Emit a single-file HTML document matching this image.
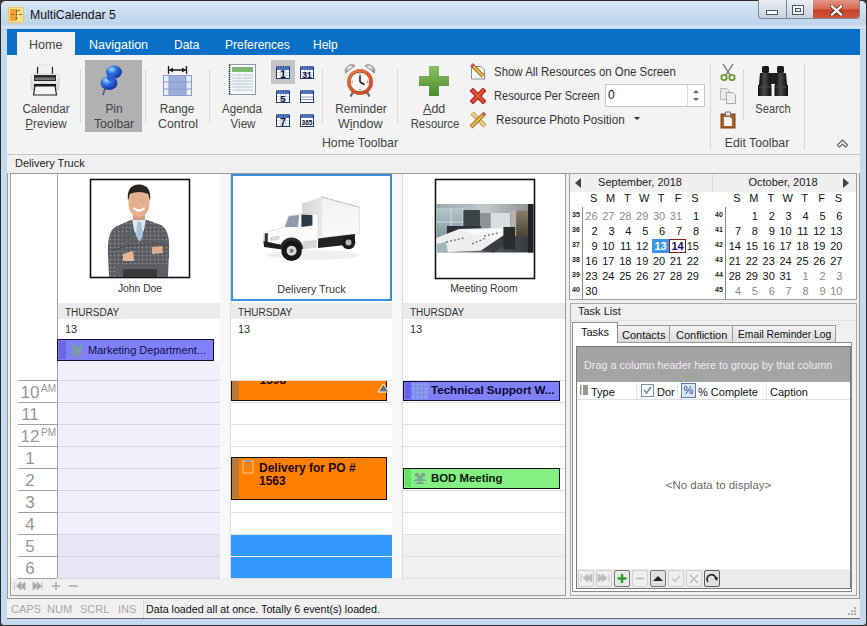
<!DOCTYPE html>
<html><head><meta charset="utf-8">
<style>
*{margin:0;padding:0;box-sizing:border-box}
html,body{width:867px;height:626px;overflow:hidden;background:#3a3a3a}
body{font-family:"Liberation Sans",sans-serif;font-size:12px;color:#262626;position:relative}
.a{position:absolute}
.frame{left:0;top:0;width:867px;height:626px;border:1px solid #2b2b2b;border-radius:6px 6px 4px 4px;background:#c4daf0}
.title{left:30px;top:8px;font-size:12.5px;color:#111;transform-origin:0 0;transform:scaleX(0.98);white-space:nowrap}
.tabbar{left:7px;top:29px;width:853px;height:26px;background:#0a6fc6}
.tab{top:9px;color:#fff;font-size:12px}
.hometab{left:17px;top:32px;width:58px;height:23px;background:#f3f3f3}
.ribbon{left:7px;top:55px;width:853px;height:100px;background:#f3f3f3;border-bottom:1px solid #c6c6c6}
.lb{font-size:12.5px;color:#444;text-align:center;line-height:15px;white-space:nowrap}
.sep{width:1px;background:#d8d8d8}
</style></head><body>
<div class="a frame"></div>
<div class="a" style="left:1px;top:1px;width:865px;height:27px;border-radius:5px 5px 0 0;background:linear-gradient(#dae8f6,#c8dcf0 45%,#bed4ec 85%,#dce8f4)"></div>
<div class="a" style="left:7px;top:155px;width:853px;height:463px;background:#f0f0f0;border-left:1px solid #8e9aa6;border-right:1px solid #8e9aa6"></div>
<!-- title bar -->
<svg class="a" style="left:8px;top:7px" width="16" height="16" viewBox="0 0 16 16"><rect x="0.5" y="0.5" width="15" height="15" rx="1.5" fill="#fbe08a" stroke="#f2c650"/><rect x="2" y="2" width="7" height="12" fill="#f2a038"/><path d="M8.5 3 V13" stroke="#6a4a10" stroke-width="1.2" stroke-dasharray="2 1.5"/><path d="M3 7.5 H6 M11 7.5 H14" stroke="#b05010" stroke-width="1.2"/><path d="M10 4 L12 3" stroke="#6a4a10" stroke-width="1"/></svg>
<div class="a title">MultiCalendar 5</div>
<!-- window buttons -->
<div class="a" style="left:758px;top:0;width:102px;height:19px;border:1px solid #7a8696;border-top:none;border-radius:0 0 4px 4px;overflow:hidden;background:linear-gradient(#e9eef4,#c9d3de)">
  <div class="a" style="left:27px;top:0;width:1px;height:19px;background:#7a8696"></div>
  <div class="a" style="left:54px;top:0;width:47px;height:19px;background:linear-gradient(#e49484,#d86a56 45%,#c8402a 55%,#d05a40)"></div>
</div>
<div class="a" style="left:766px;top:10px;width:12px;height:5px;background:#fff;border:1px solid #4a5566"></div>
<div class="a" style="left:792px;top:5px;width:12px;height:10px;border:1px solid #4a5566;background:#fff"></div>
<div class="a" style="left:795px;top:8px;width:6px;height:4px;border:1px solid #4a5566;background:#dfe6ee"></div>
<svg class="a" style="left:830px;top:5px" width="13" height="11" viewBox="0 0 13 11"><path d="M2 1.5 L11 9.5 M11 1.5 L2 9.5" stroke="#5a2018" stroke-width="4" stroke-linecap="square"/><path d="M2 1.5 L11 9.5 M11 1.5 L2 9.5" stroke="#fff" stroke-width="2.4" stroke-linecap="square"/></svg>

<!-- tab bar -->
<div class="a tabbar"></div>
<div class="a hometab"></div>
<div class="a tab" style="left:29px;top:38px;color:#444;font-size:12.5px">Home</div>
<div class="a tab" style="left:89px;top:38px;font-size:12.5px">Navigation</div>
<div class="a tab" style="left:174px;top:38px">Data</div>
<div class="a tab" style="left:225px;top:38px">Preferences</div>
<div class="a tab" style="left:313px;top:38px">Help</div>

<!-- ribbon -->
<div class="a ribbon"></div>
<!-- separators -->
<div class="a sep" style="left:80px;top:70px;height:53px"></div>
<div class="a sep" style="left:145px;top:70px;height:53px"></div>
<div class="a sep" style="left:209px;top:70px;height:53px"></div>
<div class="a sep" style="left:322px;top:70px;height:53px"></div>
<div class="a sep" style="left:397px;top:70px;height:53px"></div>
<div class="a sep" style="left:710px;top:63px;height:87px"></div>
<div class="a sep" style="left:743px;top:70px;height:50px"></div>
<div class="a sep" style="left:804px;top:63px;height:87px"></div>
<!-- pin highlight -->
<div class="a" style="left:85px;top:60px;width:57px;height:72px;background:#b1b1b1"></div>
<div class="a" style="left:271px;top:60px;width:24px;height:24px;background:#c4c4c4"></div>
<!-- printer -->
<svg class="a" style="left:29px;top:64px" width="32" height="32" viewBox="0 0 32 32">
 <defs><linearGradient id="pg" x1="0" y1="0" x2="0" y2="1"><stop offset="0" stop-color="#fafafa"/><stop offset="1" stop-color="#cfcfcf"/></linearGradient></defs>
 <rect x="9" y="1" width="14" height="11" fill="#efefef" stroke="#d4d4d4" stroke-width="0.6"/>
 <path d="M8.5 3 V12 M23.5 3 V12" stroke="#222" stroke-width="1.2"/>
 <rect x="2" y="10" width="28" height="16" rx="3" fill="url(#pg)" stroke="#bbb" stroke-width="0.6"/>
 <rect x="5" y="11" width="22" height="6" fill="#2a2a2a"/>
 <rect x="6" y="13.5" width="20" height="2.5" fill="#777"/>
 <rect x="5" y="20" width="22" height="2.5" fill="#111"/>
 <path d="M6 22 L4.5 31 L27.5 31 L26 22 Z" fill="#f5f5f5" stroke="#222" stroke-width="1.2"/>
</svg>
<div class="a lb" style="left:-14.3px;top:102px;width:120px;transform:scaleX(0.93)">Calendar</div>
<div class="a lb" style="left:-14.4px;top:117px;width:120px;transform:scaleX(0.93)"><u>P</u>review</div>
<!-- pin -->
<svg class="a" style="left:98px;top:64px" width="28" height="32" viewBox="0 0 28 32">
 <defs>
 <radialGradient id="bl" cx="0.35" cy="0.3" r="0.8"><stop offset="0" stop-color="#a8dcff"/><stop offset="0.4" stop-color="#2a6ee0"/><stop offset="1" stop-color="#0a2890"/></radialGradient>
 </defs>
 <path d="M7 24 L5 31" stroke="#556" stroke-width="1.5"/>
 <ellipse cx="11" cy="19" rx="8.5" ry="7" fill="url(#bl)"/>
 <ellipse cx="16" cy="8" rx="8" ry="6.5" fill="url(#bl)"/>
 <ellipse cx="13" cy="14" rx="4" ry="3" fill="#2a5fd0"/>
</svg>
<div class="a lb" style="left:54.0px;top:102px;width:120px;transform:scaleX(0.95)">Pin</div>
<div class="a lb" style="left:53.7px;top:117px;width:120px;transform:scaleX(0.98)">Toolbar</div>
<!-- range -->
<svg class="a" style="left:162px;top:65px" width="31" height="32" viewBox="0 0 31 32">
 <path d="M6.5 1 V9 M24.5 1 V9 M7 5 H24" stroke="#222" stroke-width="1.3"/>
 <path d="M7 5 L11 2.5 V7.5 Z M24 5 L20 2.5 V7.5 Z" fill="#222"/>
 <rect x="1.5" y="10.5" width="28" height="20" fill="#e9eef8" stroke="#8a9ccc"/>
 <rect x="7" y="11" width="17" height="19" fill="#9daed8"/>
 <path d="M2 17 H29 M2 24 H29 M7 11 V30 M24 11 V30" stroke="#8a9ccc" stroke-width="1"/>
</svg>
<div class="a lb" style="left:117.2px;top:102px;width:120px;transform:scaleX(0.94)">Range</div>
<div class="a lb" style="left:118.1px;top:117px;width:120px;transform:scaleX(0.99)">Control</div>
<!-- agenda -->
<svg class="a" style="left:227px;top:64px" width="30" height="32" viewBox="0 0 30 32">
 <rect x="2.5" y="0.5" width="26" height="30" fill="#f4f6f8" stroke="#8c99a6"/>
 <path d="M2.5 1 V31" stroke="#333" stroke-width="1.5" stroke-dasharray="1 1"/>
 <rect x="5" y="3" width="21" height="5" fill="#7ab873"/>
 <path d="M5 11 H26 M5 14 H26 M5 17 H26 M5 20 H26 M5 23 H26 M5 26 H26" stroke="#b9c6d6" stroke-width="1"/>
 <path d="M12 9 V28 M19 9 V28" stroke="#d5dde6" stroke-width="1"/>
</svg>
<div class="a lb" style="left:182.3px;top:102px;width:120px;transform:scaleX(0.93)">Agenda</div>
<div class="a lb" style="left:182.7px;top:117px;width:120px;transform:scaleX(0.93)">View</div>
<!-- small cal icons -->
<svg class="a" style="left:276px;top:65px" width="14" height="14" viewBox="0 0 14 14"><rect x="0.5" y="2" width="13" height="11.5" fill="#fff" stroke="#233a78" stroke-width="1"/><rect x="1" y="2.5" width="12" height="2.5" fill="#4a72c8"/><path d="M2.5 1 V3 M5 1 V3 M7.5 1 V3 M10 1 V3 M12 1 V3" stroke="#233a78" stroke-width="0.9"/><path d="M1 7.5 H13 M1 10 H13 M4.5 5 V13 M7 5 V13 M9.5 5 V13" stroke="#c0cce8" stroke-width="0.8"/><text x="7" y="12.6" font-size="10" font-weight="bold" text-anchor="middle" fill="#0a0a2a" font-family="Liberation Sans">1</text></svg>
<svg class="a" style="left:300px;top:65px" width="14" height="14" viewBox="0 0 14 14"><rect x="0.5" y="2" width="13" height="11.5" fill="#fff" stroke="#233a78" stroke-width="1"/><rect x="1" y="2.5" width="12" height="2.5" fill="#4a72c8"/><path d="M2.5 1 V3 M5 1 V3 M7.5 1 V3 M10 1 V3 M12 1 V3" stroke="#233a78" stroke-width="0.9"/><path d="M1 7.5 H13 M1 10 H13 M4.5 5 V13 M7 5 V13 M9.5 5 V13" stroke="#c0cce8" stroke-width="0.8"/><text x="7" y="12.6" font-size="8.5" font-weight="bold" text-anchor="middle" fill="#0a0a2a" font-family="Liberation Sans">31</text></svg>
<svg class="a" style="left:276px;top:89px" width="14" height="14" viewBox="0 0 14 14"><rect x="0.5" y="2" width="13" height="11.5" fill="#fff" stroke="#233a78" stroke-width="1"/><rect x="1" y="2.5" width="12" height="2.5" fill="#4a72c8"/><path d="M2.5 1 V3 M5 1 V3 M7.5 1 V3 M10 1 V3 M12 1 V3" stroke="#233a78" stroke-width="0.9"/><path d="M1 7.5 H13 M1 10 H13 M4.5 5 V13 M7 5 V13 M9.5 5 V13" stroke="#c0cce8" stroke-width="0.8"/><text x="7" y="12.6" font-size="9.5" font-weight="bold" text-anchor="middle" fill="#0a0a2a" font-family="Liberation Sans">5</text></svg>
<svg class="a" style="left:300px;top:89px" width="14" height="14" viewBox="0 0 14 14"><rect x="0.5" y="2" width="13" height="11.5" fill="#fff" stroke="#233a78" stroke-width="1"/><rect x="1" y="2.5" width="12" height="2.5" fill="#4a72c8"/><path d="M2.5 1 V3 M5 1 V3 M7.5 1 V3 M10 1 V3 M12 1 V3" stroke="#233a78" stroke-width="0.9"/><path d="M1 8 H13 M1 10.5 H13" stroke="#6a7ab0" stroke-width="0.8"/></svg>
<svg class="a" style="left:276px;top:113px" width="14" height="14" viewBox="0 0 14 14"><rect x="0.5" y="2" width="13" height="11.5" fill="#fff" stroke="#233a78" stroke-width="1"/><rect x="1" y="2.5" width="12" height="2.5" fill="#4a72c8"/><path d="M2.5 1 V3 M5 1 V3 M7.5 1 V3 M10 1 V3 M12 1 V3" stroke="#233a78" stroke-width="0.9"/><path d="M1 7.5 H13 M1 10 H13 M4.5 5 V13 M7 5 V13 M9.5 5 V13" stroke="#c0cce8" stroke-width="0.8"/><text x="7" y="12.6" font-size="10" font-weight="bold" text-anchor="middle" fill="#0a0a2a" font-family="Liberation Sans">7</text></svg>
<svg class="a" style="left:300px;top:113px" width="14" height="14" viewBox="0 0 14 14"><rect x="0.5" y="2" width="13" height="11.5" fill="#fff" stroke="#233a78" stroke-width="1"/><rect x="1" y="2.5" width="12" height="2.5" fill="#4a72c8"/><path d="M2.5 1 V3 M5 1 V3 M7.5 1 V3 M10 1 V3 M12 1 V3" stroke="#233a78" stroke-width="0.9"/><text x="7" y="12" font-size="6.6" font-weight="bold" text-anchor="middle" fill="#0a0a2a" font-family="Liberation Sans">365</text></svg>
<!-- alarm clock -->
<svg class="a" style="left:344px;top:63px" width="32" height="35" viewBox="0 0 32 35">
<defs><radialGradient id="bell" cx="0.4" cy="0.3" r="0.8"><stop offset="0" stop-color="#f4f4f4"/><stop offset="1" stop-color="#8c8c8c"/></radialGradient>
<radialGradient id="rim" cx="0.4" cy="0.35" r="0.7"><stop offset="0" stop-color="#f08a5a"/><stop offset="1" stop-color="#c84a20"/></radialGradient></defs>
<path d="M1.5 10 A6.5 6.5 0 0 1 11 2.5 Z" fill="url(#bell)" stroke="#777" stroke-width="0.8"/>
<path d="M30.5 10 A6.5 6.5 0 0 0 21 2.5 Z" fill="url(#bell)" stroke="#777" stroke-width="0.8"/>
<path d="M9 29 L6.5 33.5 M23 29 L25.5 33.5" stroke="#666" stroke-width="2.2"/>
<circle cx="16" cy="19" r="13" fill="url(#rim)"/>
<circle cx="16" cy="19" r="9.8" fill="#f8f8f6" stroke="#a83c18" stroke-width="0.8"/>
<g stroke="#555" stroke-width="1"><path d="M16 10.5 V12 M16 26 V27.5 M7.5 19 H9 M23 19 H24.5"/></g>
<path d="M16 19 V12.5 M16 19 L20.5 21.5" stroke="#222" stroke-width="1.6"/>
</svg>
<div class="a lb" style="left:301.0px;top:102px;width:120px;transform:scaleX(0.95)">Reminder</div>
<div class="a lb" style="left:300.2px;top:117px;width:120px;transform:scaleX(1.0)">W<u>i</u>ndow</div>
<div class="a lb" style="left:299.6px;top:136px;width:120px;transform:scaleX(0.98)">Home Toolbar</div>
<!-- add -->
<svg class="a" style="left:418px;top:65px" width="32" height="32" viewBox="0 0 32 32">
 <defs><linearGradient id="gg" x1="0" y1="0" x2="0" y2="1"><stop offset="0" stop-color="#8cc063"/><stop offset="1" stop-color="#4c8a2c"/></linearGradient></defs>
 <path d="M11 1 H21 V11 H31 V21 H21 V31 H11 V21 H1 V11 H11 Z" fill="url(#gg)"/>
</svg>
<div class="a lb" style="left:374.2px;top:102px;width:120px;transform:scaleX(1.0)"><u>A</u>dd</div>
<div class="a lb" style="left:374.6px;top:117px;width:120px;transform:scaleX(0.91)">Resource</div>
<!-- small rows -->
<svg class="a" style="left:469px;top:63px" width="17" height="17" viewBox="0 0 17 17"><path d="M2.5 3.5 H12 L15.5 7 V16 H2.5 Z" fill="#f6f6f6" stroke="#8a8a8a"/><path d="M3 2 L14 13" stroke="#8a6a30" stroke-width="4"/><path d="M3 2 L14 13" stroke="#f0b848" stroke-width="2.4"/><path d="M2.5 1.5 L4.5 3.5" stroke="#c05070" stroke-width="3.5"/></svg>
<div class="a" style="left:494px;top:65px;font-size:12.5px;line-height:15px;color:#333;white-space:nowrap;transform-origin:0 0;transform:scaleX(0.915)">Show All Resources on One Screen</div>
<svg class="a" style="left:470px;top:88px" width="16" height="16" viewBox="0 0 16 16"><path d="M3 3 L13 13 M13 3 L3 13" stroke="#a82818" stroke-width="5" stroke-linecap="square"/><path d="M3 3 L13 13 M13 3 L3 13" stroke="#e0503a" stroke-width="2.8" stroke-linecap="square"/></svg>
<div class="a" style="left:494px;top:89px;font-size:12.5px;line-height:15px;color:#333;white-space:nowrap;transform-origin:0 0;transform:scaleX(0.885)">Resource Per Screen</div>
<div class="a" style="left:605px;top:84px;width:100px;height:23px;background:#fff;border:1px solid #c6c6c6"></div>
<div class="a" style="left:687px;top:85px;width:1px;height:21px;background:#d8d8d8"></div>
<div class="a" style="left:608px;top:88px;font-size:12px;color:#222">0</div>
<svg class="a" style="left:691px;top:87px" width="10" height="17" viewBox="0 0 10 17"><path d="M2 6 L5 3 L8 6 Z M2 11 L5 14 L8 11 Z" fill="#666"/></svg>
<svg class="a" style="left:469px;top:111px" width="18" height="18" viewBox="0 0 18 18"><path d="M3 2 L16 15" stroke="#b89848" stroke-width="4.5"/><path d="M3 2 L16 15" stroke="#e8d080" stroke-width="2.5"/><path d="M2 16 L15 3" stroke="#8a6a30" stroke-width="4"/><path d="M2 16 L15 3" stroke="#f0b848" stroke-width="2.4"/><path d="M14 4 L16 2" stroke="#c05070" stroke-width="3.5"/></svg>
<div class="a" style="left:496px;top:113px;font-size:12.5px;line-height:15px;color:#333;white-space:nowrap;transform-origin:0 0;transform:scaleX(0.935)">Resource Photo Position</div>
<svg class="a" style="left:634px;top:117px" width="6" height="4" viewBox="0 0 6 4"><path d="M0 0 H6 L3 3 Z" fill="#333"/></svg>
<!-- edit group -->
<svg class="a" style="left:719px;top:63px" width="18" height="18" viewBox="0 0 18 18"><path d="M4 1 L11 12 M14 1 L7 12" stroke="#888" stroke-width="1.5"/><circle cx="5" cy="14.5" r="2.7" fill="none" stroke="#6a9a30" stroke-width="1.8"/><circle cx="13" cy="14.5" r="2.7" fill="none" stroke="#6a9a30" stroke-width="1.8"/></svg>
<svg class="a" style="left:719px;top:87px" width="18" height="17" viewBox="0 0 18 17"><path d="M1.5 1.5 H8 L10 3.5 V12.5 H1.5 Z" fill="#e8e8e8" stroke="#bbb"/><path d="M7.5 5.5 H14 L16.5 8 V16.5 H7.5 Z" fill="#f0f0f0" stroke="#aaa"/></svg>
<svg class="a" style="left:720px;top:111px" width="16" height="18" viewBox="0 0 16 18"><rect x="1" y="3" width="14" height="14" fill="#a8602a" stroke="#7a4418"/><path d="M4 6 H10 L12 8 V15 H4 Z" fill="#f4f4f4"/><rect x="5.5" y="1" width="5" height="4" fill="#ddd" stroke="#666" stroke-width="0.8"/></svg>
<svg class="a" style="left:756px;top:65px" width="34" height="33" viewBox="0 0 34 33">
<defs><linearGradient id="bk" x1="0" y1="0" x2="1" y2="0"><stop offset="0" stop-color="#0c0c0c"/><stop offset="0.45" stop-color="#4a4a4a"/><stop offset="1" stop-color="#0c0c0c"/></linearGradient></defs>
<rect x="6" y="1" width="7" height="7" rx="1.5" fill="#1a1a1a"/><rect x="21" y="1" width="7" height="7" rx="1.5" fill="#1a1a1a"/>
<rect x="12" y="8" width="10" height="11" fill="#222"/>
<path d="M4 8 H14 L15 20 H3 Z" fill="url(#bk)"/>
<path d="M20 8 H30 L31 20 H19 Z" fill="url(#bk)"/>
<path d="M2 20 H15.5 L15.5 31 H2 Z" fill="url(#bk)"/>
<path d="M18.5 20 H32 L32 31 H18.5 Z" fill="url(#bk)"/>
<path d="M3 22 H15 M19 22 H31" stroke="#555" stroke-width="0.8"/>
</svg>
<div class="a lb" style="left:713.4px;top:102px;width:120px;transform:scaleX(0.89)">Search</div>
<div class="a lb" style="left:697.3px;top:136px;width:120px;transform:scaleX(0.98)">Edit Toolbar</div>
<svg class="a" style="left:836px;top:139px" width="13" height="10" viewBox="0 0 13 10"><path d="M1.5 6 L6.5 1 L11.5 6 L9.5 8 L6.5 5 L3.5 8 Z" stroke="#6a6a6a" stroke-width="1.3" fill="#fff" stroke-linejoin="round"/></svg>


<!-- header -->
<div class="a" style="left:7px;top:155px;width:853px;height:18px;background:#f0f0f0"></div>
<div class="a" style="left:15px;top:157px;font-size:11px;color:#222">Delivery Truck</div>

<!-- calendar panel -->
<div class="a" style="left:10px;top:173px;width:556px;height:423px;border:1px solid #9a9a9a;background:#f0f0f0"></div>
<div class="a" style="left:11px;top:174px;width:554px;height:404px;background:#fff"></div>
<div class="a" style="left:220px;top:174px;width:11px;height:404px;background:#f6f7f9"></div>
<div class="a" style="left:392px;top:174px;width:11px;height:404px;background:#f6f7f9"></div>
<div class="a" style="left:57px;top:174px;width:1px;height:404px;background:#a0a0a0"></div>

<div class="a" style="left:58px;top:303px;width:162px;height:16px;background:#ebebeb"></div>
<div class="a" style="left:65px;top:307px;font-size:10px;color:#333">THURSDAY</div>
<div class="a" style="left:65px;top:323px;font-size:11px;color:#333">13</div>
<div class="a" style="left:230px;top:174px;width:1px;height:404px;background:#dcdcdc"></div>
<div class="a" style="left:231px;top:303px;width:161px;height:16px;background:#ebebeb"></div>
<div class="a" style="left:238px;top:307px;font-size:10px;color:#333">THURSDAY</div>
<div class="a" style="left:238px;top:323px;font-size:11px;color:#333">13</div>
<div class="a" style="left:402px;top:174px;width:1px;height:404px;background:#dcdcdc"></div>
<div class="a" style="left:403px;top:303px;width:162px;height:16px;background:#ebebeb"></div>
<div class="a" style="left:410px;top:307px;font-size:10px;color:#333">THURSDAY</div>
<div class="a" style="left:410px;top:323px;font-size:11px;color:#333">13</div>
<div class="a" style="left:58px;top:361px;width:162px;height:173px;background:#f0f0fc"></div>
<div class="a" style="left:58px;top:534px;width:162px;height:44px;background:#e6e6f7"></div>
<div class="a" style="left:231px;top:535px;width:161px;height:43px;background:#3399ff"></div>
<div class="a" style="left:403px;top:534px;width:162px;height:44px;background:#f0f0f0"></div>
<div class="a" style="left:18px;top:380px;width:39px;height:1px;background:#a0a0a0"></div>
<div class="a" style="left:58px;top:380px;width:162px;height:1px;background:#d6d6ea"></div>
<div class="a" style="left:231px;top:380px;width:161px;height:1px;background:#e0e0e0"></div>
<div class="a" style="left:403px;top:380px;width:162px;height:1px;background:#e0e0e0"></div>
<div class="a" style="left:18px;top:402px;width:39px;height:1px;background:#a0a0a0"></div>
<div class="a" style="left:58px;top:402px;width:162px;height:1px;background:#d6d6ea"></div>
<div class="a" style="left:231px;top:402px;width:161px;height:1px;background:#e0e0e0"></div>
<div class="a" style="left:403px;top:402px;width:162px;height:1px;background:#e0e0e0"></div>
<div class="a" style="left:18px;top:424px;width:39px;height:1px;background:#a0a0a0"></div>
<div class="a" style="left:58px;top:424px;width:162px;height:1px;background:#d6d6ea"></div>
<div class="a" style="left:231px;top:424px;width:161px;height:1px;background:#e0e0e0"></div>
<div class="a" style="left:403px;top:424px;width:162px;height:1px;background:#e0e0e0"></div>
<div class="a" style="left:18px;top:446px;width:39px;height:1px;background:#a0a0a0"></div>
<div class="a" style="left:58px;top:446px;width:162px;height:1px;background:#d6d6ea"></div>
<div class="a" style="left:231px;top:446px;width:161px;height:1px;background:#e0e0e0"></div>
<div class="a" style="left:403px;top:446px;width:162px;height:1px;background:#e0e0e0"></div>
<div class="a" style="left:18px;top:468px;width:39px;height:1px;background:#a0a0a0"></div>
<div class="a" style="left:58px;top:468px;width:162px;height:1px;background:#d6d6ea"></div>
<div class="a" style="left:231px;top:468px;width:161px;height:1px;background:#e0e0e0"></div>
<div class="a" style="left:403px;top:468px;width:162px;height:1px;background:#e0e0e0"></div>
<div class="a" style="left:18px;top:490px;width:39px;height:1px;background:#a0a0a0"></div>
<div class="a" style="left:58px;top:490px;width:162px;height:1px;background:#d6d6ea"></div>
<div class="a" style="left:231px;top:490px;width:161px;height:1px;background:#e0e0e0"></div>
<div class="a" style="left:403px;top:490px;width:162px;height:1px;background:#e0e0e0"></div>
<div class="a" style="left:18px;top:512px;width:39px;height:1px;background:#a0a0a0"></div>
<div class="a" style="left:58px;top:512px;width:162px;height:1px;background:#d6d6ea"></div>
<div class="a" style="left:231px;top:512px;width:161px;height:1px;background:#e0e0e0"></div>
<div class="a" style="left:403px;top:512px;width:162px;height:1px;background:#e0e0e0"></div>
<div class="a" style="left:18px;top:534px;width:39px;height:1px;background:#a0a0a0"></div>
<div class="a" style="left:58px;top:534px;width:162px;height:1px;background:#d6d6ea"></div>
<div class="a" style="left:231px;top:534px;width:161px;height:1px;background:#e0e0e0"></div>
<div class="a" style="left:403px;top:534px;width:162px;height:1px;background:#e0e0e0"></div>
<div class="a" style="left:18px;top:556px;width:39px;height:1px;background:#a0a0a0"></div>
<div class="a" style="left:58px;top:556px;width:162px;height:1px;background:#d6d6ea"></div>
<div class="a" style="left:231px;top:556px;width:161px;height:1px;background:#fff"></div>
<div class="a" style="left:403px;top:556px;width:162px;height:1px;background:#e0e0e0"></div>
<div class="a" style="left:18px;top:578px;width:39px;height:1px;background:#a0a0a0"></div>
<div class="a" style="left:58px;top:578px;width:162px;height:1px;background:#d6d6ea"></div>
<div class="a" style="left:231px;top:578px;width:161px;height:1px;background:#e0e0e0"></div>
<div class="a" style="left:403px;top:578px;width:162px;height:1px;background:#e0e0e0"></div>
<div class="a" style="left:18px;top:384px;width:24px;text-align:center;font-size:17px;color:#969696;line-height:18px">10</div>
<div class="a" style="left:41px;top:383px;font-size:10px;color:#969696">AM</div>
<div class="a" style="left:18px;top:406px;width:24px;text-align:center;font-size:17px;color:#969696;line-height:18px">11</div>
<div class="a" style="left:18px;top:428px;width:24px;text-align:center;font-size:17px;color:#969696;line-height:18px">12</div>
<div class="a" style="left:41px;top:427px;font-size:10px;color:#969696">PM</div>
<div class="a" style="left:18px;top:450px;width:24px;text-align:center;font-size:17px;color:#969696;line-height:18px">1</div>
<div class="a" style="left:18px;top:472px;width:24px;text-align:center;font-size:17px;color:#969696;line-height:18px">2</div>
<div class="a" style="left:18px;top:494px;width:24px;text-align:center;font-size:17px;color:#969696;line-height:18px">3</div>
<div class="a" style="left:18px;top:516px;width:24px;text-align:center;font-size:17px;color:#969696;line-height:18px">4</div>
<div class="a" style="left:18px;top:538px;width:24px;text-align:center;font-size:17px;color:#969696;line-height:18px">5</div>
<div class="a" style="left:18px;top:560px;width:24px;text-align:center;font-size:17px;color:#969696;line-height:18px">6</div>
<!-- mini calendars -->
<div class="a" style="left:566px;top:173px;width:3px;height:1px;background:#9a9a9a"></div>
<div class="a" style="left:569px;top:173px;width:288px;height:127px;border:1px solid #a0a0a0;background:#fff"></div>
<div class="a" style="left:570px;top:174px;width:286px;height:18px;background:#efefef"></div>
<div class="a" style="left:712px;top:174px;width:1px;height:18px;background:#dadada"></div>
<svg class="a" style="left:575px;top:178px" width="6" height="10" viewBox="0 0 6 10"><path d="M6 0 V10 L0 5 Z" fill="#444"/></svg>
<svg class="a" style="left:843px;top:178px" width="6" height="10" viewBox="0 0 6 10"><path d="M0 0 V10 L6 5 Z" fill="#444"/></svg>
<div class="a" style="left:590px;top:176px;width:100px;text-align:center;font-size:11px;color:#222">September, 2018</div>
<div class="a" style="left:733px;top:176px;width:100px;text-align:center;font-size:11px;color:#222">October, 2018</div>
<div class="a" style="left:585.6px;top:192px;width:16px;text-align:center;font-size:11px;color:#111">S</div>
<div class="a" style="left:602.5px;top:192px;width:16px;text-align:center;font-size:11px;color:#111">M</div>
<div class="a" style="left:619.4px;top:192px;width:16px;text-align:center;font-size:11px;color:#111">T</div>
<div class="a" style="left:636.3px;top:192px;width:16px;text-align:center;font-size:11px;color:#111">W</div>
<div class="a" style="left:653.2px;top:192px;width:16px;text-align:center;font-size:11px;color:#111">T</div>
<div class="a" style="left:670.1px;top:192px;width:16px;text-align:center;font-size:11px;color:#111">F</div>
<div class="a" style="left:687.0px;top:192px;width:16px;text-align:center;font-size:11px;color:#111">S</div>
<div class="a" style="left:582px;top:207px;width:1px;height:92px;background:#8a8a8a"></div>
<div class="a" style="left:570px;top:211px;width:12px;text-align:center;font-size:7px;font-weight:bold;color:#222">35</div>
<div class="a" style="left:570px;top:226px;width:12px;text-align:center;font-size:7px;font-weight:bold;color:#222">36</div>
<div class="a" style="left:570px;top:241px;width:12px;text-align:center;font-size:7px;font-weight:bold;color:#222">37</div>
<div class="a" style="left:570px;top:256px;width:12px;text-align:center;font-size:7px;font-weight:bold;color:#222">38</div>
<div class="a" style="left:570px;top:271px;width:12px;text-align:center;font-size:7px;font-weight:bold;color:#222">39</div>
<div class="a" style="left:570px;top:286px;width:12px;text-align:center;font-size:7px;font-weight:bold;color:#222">40</div>
<div class="a" style="left:577.6px;top:210px;width:20px;text-align:right;font-size:11px;line-height:13px;color:#8a8a8a;">26</div>
<div class="a" style="left:594.5px;top:210px;width:20px;text-align:right;font-size:11px;line-height:13px;color:#8a8a8a;">27</div>
<div class="a" style="left:611.4px;top:210px;width:20px;text-align:right;font-size:11px;line-height:13px;color:#8a8a8a;">28</div>
<div class="a" style="left:628.3px;top:210px;width:20px;text-align:right;font-size:11px;line-height:13px;color:#8a8a8a;">29</div>
<div class="a" style="left:645.2px;top:210px;width:20px;text-align:right;font-size:11px;line-height:13px;color:#8a8a8a;">30</div>
<div class="a" style="left:662.1px;top:210px;width:20px;text-align:right;font-size:11px;line-height:13px;color:#8a8a8a;">31</div>
<div class="a" style="left:679.0px;top:210px;width:20px;text-align:right;font-size:11px;line-height:13px;color:#111;">1</div>
<div class="a" style="left:577.6px;top:225px;width:20px;text-align:right;font-size:11px;line-height:13px;color:#111;">2</div>
<div class="a" style="left:594.5px;top:225px;width:20px;text-align:right;font-size:11px;line-height:13px;color:#111;">3</div>
<div class="a" style="left:611.4px;top:225px;width:20px;text-align:right;font-size:11px;line-height:13px;color:#111;">4</div>
<div class="a" style="left:628.3px;top:225px;width:20px;text-align:right;font-size:11px;line-height:13px;color:#111;">5</div>
<div class="a" style="left:645.2px;top:225px;width:20px;text-align:right;font-size:11px;line-height:13px;color:#111;">6</div>
<div class="a" style="left:662.1px;top:225px;width:20px;text-align:right;font-size:11px;line-height:13px;color:#111;">7</div>
<div class="a" style="left:679.0px;top:225px;width:20px;text-align:right;font-size:11px;line-height:13px;color:#111;">8</div>
<div class="a" style="left:577.6px;top:240px;width:20px;text-align:right;font-size:11px;line-height:13px;color:#111;">9</div>
<div class="a" style="left:594.5px;top:240px;width:20px;text-align:right;font-size:11px;line-height:13px;color:#111;">10</div>
<div class="a" style="left:611.4px;top:240px;width:20px;text-align:right;font-size:11px;line-height:13px;color:#111;">11</div>
<div class="a" style="left:628.3px;top:240px;width:20px;text-align:right;font-size:11px;line-height:13px;color:#111;">12</div>
<div class="a" style="left:651.9px;top:238.5px;width:17px;height:14.5px;background:#3c96f0"></div>
<div class="a" style="left:652px;top:240px;width:17px;text-align:center;font-size:11px;line-height:13px;color:#fff;font-weight:bold;">13</div>
<div class="a" style="left:669px;top:238.5px;width:17px;height:14.5px;border:1px solid #8b1c1c"></div>
<div class="a" style="left:669px;top:240px;width:17px;text-align:center;font-size:11px;line-height:13px;color:#10106a;font-weight:bold;">14</div>
<div class="a" style="left:679.0px;top:240px;width:20px;text-align:right;font-size:11px;line-height:13px;color:#111;">15</div>
<div class="a" style="left:577.6px;top:255px;width:20px;text-align:right;font-size:11px;line-height:13px;color:#111;">16</div>
<div class="a" style="left:594.5px;top:255px;width:20px;text-align:right;font-size:11px;line-height:13px;color:#111;">17</div>
<div class="a" style="left:611.4px;top:255px;width:20px;text-align:right;font-size:11px;line-height:13px;color:#111;">18</div>
<div class="a" style="left:628.3px;top:255px;width:20px;text-align:right;font-size:11px;line-height:13px;color:#111;">19</div>
<div class="a" style="left:645.2px;top:255px;width:20px;text-align:right;font-size:11px;line-height:13px;color:#111;">20</div>
<div class="a" style="left:662.1px;top:255px;width:20px;text-align:right;font-size:11px;line-height:13px;color:#111;">21</div>
<div class="a" style="left:679.0px;top:255px;width:20px;text-align:right;font-size:11px;line-height:13px;color:#111;">22</div>
<div class="a" style="left:577.6px;top:270px;width:20px;text-align:right;font-size:11px;line-height:13px;color:#111;">23</div>
<div class="a" style="left:594.5px;top:270px;width:20px;text-align:right;font-size:11px;line-height:13px;color:#111;">24</div>
<div class="a" style="left:611.4px;top:270px;width:20px;text-align:right;font-size:11px;line-height:13px;color:#111;">25</div>
<div class="a" style="left:628.3px;top:270px;width:20px;text-align:right;font-size:11px;line-height:13px;color:#111;">26</div>
<div class="a" style="left:645.2px;top:270px;width:20px;text-align:right;font-size:11px;line-height:13px;color:#111;">27</div>
<div class="a" style="left:662.1px;top:270px;width:20px;text-align:right;font-size:11px;line-height:13px;color:#111;">28</div>
<div class="a" style="left:679.0px;top:270px;width:20px;text-align:right;font-size:11px;line-height:13px;color:#111;">29</div>
<div class="a" style="left:577.6px;top:285px;width:20px;text-align:right;font-size:11px;line-height:13px;color:#111;">30</div>
<div class="a" style="left:729.0px;top:192px;width:16px;text-align:center;font-size:11px;color:#111">S</div>
<div class="a" style="left:745.9px;top:192px;width:16px;text-align:center;font-size:11px;color:#111">M</div>
<div class="a" style="left:762.8px;top:192px;width:16px;text-align:center;font-size:11px;color:#111">T</div>
<div class="a" style="left:779.7px;top:192px;width:16px;text-align:center;font-size:11px;color:#111">W</div>
<div class="a" style="left:796.6px;top:192px;width:16px;text-align:center;font-size:11px;color:#111">T</div>
<div class="a" style="left:813.5px;top:192px;width:16px;text-align:center;font-size:11px;color:#111">F</div>
<div class="a" style="left:830.4px;top:192px;width:16px;text-align:center;font-size:11px;color:#111">S</div>
<div class="a" style="left:725px;top:207px;width:1px;height:92px;background:#8a8a8a"></div>
<div class="a" style="left:713px;top:211px;width:12px;text-align:center;font-size:7px;font-weight:bold;color:#222">40</div>
<div class="a" style="left:713px;top:226px;width:12px;text-align:center;font-size:7px;font-weight:bold;color:#222">41</div>
<div class="a" style="left:713px;top:241px;width:12px;text-align:center;font-size:7px;font-weight:bold;color:#222">42</div>
<div class="a" style="left:713px;top:256px;width:12px;text-align:center;font-size:7px;font-weight:bold;color:#222">43</div>
<div class="a" style="left:713px;top:271px;width:12px;text-align:center;font-size:7px;font-weight:bold;color:#222">44</div>
<div class="a" style="left:713px;top:286px;width:12px;text-align:center;font-size:7px;font-weight:bold;color:#222">45</div>
<div class="a" style="left:737.9px;top:210px;width:20px;text-align:right;font-size:11px;line-height:13px;color:#111;">1</div>
<div class="a" style="left:754.8px;top:210px;width:20px;text-align:right;font-size:11px;line-height:13px;color:#111;">2</div>
<div class="a" style="left:771.7px;top:210px;width:20px;text-align:right;font-size:11px;line-height:13px;color:#111;">3</div>
<div class="a" style="left:788.6px;top:210px;width:20px;text-align:right;font-size:11px;line-height:13px;color:#111;">4</div>
<div class="a" style="left:805.5px;top:210px;width:20px;text-align:right;font-size:11px;line-height:13px;color:#111;">5</div>
<div class="a" style="left:822.4px;top:210px;width:20px;text-align:right;font-size:11px;line-height:13px;color:#111;">6</div>
<div class="a" style="left:721.0px;top:225px;width:20px;text-align:right;font-size:11px;line-height:13px;color:#111;">7</div>
<div class="a" style="left:737.9px;top:225px;width:20px;text-align:right;font-size:11px;line-height:13px;color:#111;">8</div>
<div class="a" style="left:754.8px;top:225px;width:20px;text-align:right;font-size:11px;line-height:13px;color:#111;">9</div>
<div class="a" style="left:771.7px;top:225px;width:20px;text-align:right;font-size:11px;line-height:13px;color:#111;">10</div>
<div class="a" style="left:788.6px;top:225px;width:20px;text-align:right;font-size:11px;line-height:13px;color:#111;">11</div>
<div class="a" style="left:805.5px;top:225px;width:20px;text-align:right;font-size:11px;line-height:13px;color:#111;">12</div>
<div class="a" style="left:822.4px;top:225px;width:20px;text-align:right;font-size:11px;line-height:13px;color:#111;">13</div>
<div class="a" style="left:721.0px;top:240px;width:20px;text-align:right;font-size:11px;line-height:13px;color:#111;">14</div>
<div class="a" style="left:737.9px;top:240px;width:20px;text-align:right;font-size:11px;line-height:13px;color:#111;">15</div>
<div class="a" style="left:754.8px;top:240px;width:20px;text-align:right;font-size:11px;line-height:13px;color:#111;">16</div>
<div class="a" style="left:771.7px;top:240px;width:20px;text-align:right;font-size:11px;line-height:13px;color:#111;">17</div>
<div class="a" style="left:788.6px;top:240px;width:20px;text-align:right;font-size:11px;line-height:13px;color:#111;">18</div>
<div class="a" style="left:805.5px;top:240px;width:20px;text-align:right;font-size:11px;line-height:13px;color:#111;">19</div>
<div class="a" style="left:822.4px;top:240px;width:20px;text-align:right;font-size:11px;line-height:13px;color:#111;">20</div>
<div class="a" style="left:721.0px;top:255px;width:20px;text-align:right;font-size:11px;line-height:13px;color:#111;">21</div>
<div class="a" style="left:737.9px;top:255px;width:20px;text-align:right;font-size:11px;line-height:13px;color:#111;">22</div>
<div class="a" style="left:754.8px;top:255px;width:20px;text-align:right;font-size:11px;line-height:13px;color:#111;">23</div>
<div class="a" style="left:771.7px;top:255px;width:20px;text-align:right;font-size:11px;line-height:13px;color:#111;">24</div>
<div class="a" style="left:788.6px;top:255px;width:20px;text-align:right;font-size:11px;line-height:13px;color:#111;">25</div>
<div class="a" style="left:805.5px;top:255px;width:20px;text-align:right;font-size:11px;line-height:13px;color:#111;">26</div>
<div class="a" style="left:822.4px;top:255px;width:20px;text-align:right;font-size:11px;line-height:13px;color:#111;">27</div>
<div class="a" style="left:721.0px;top:270px;width:20px;text-align:right;font-size:11px;line-height:13px;color:#111;">28</div>
<div class="a" style="left:737.9px;top:270px;width:20px;text-align:right;font-size:11px;line-height:13px;color:#111;">29</div>
<div class="a" style="left:754.8px;top:270px;width:20px;text-align:right;font-size:11px;line-height:13px;color:#111;">30</div>
<div class="a" style="left:771.7px;top:270px;width:20px;text-align:right;font-size:11px;line-height:13px;color:#111;">31</div>
<div class="a" style="left:788.6px;top:270px;width:20px;text-align:right;font-size:11px;line-height:13px;color:#8a8a8a;">1</div>
<div class="a" style="left:805.5px;top:270px;width:20px;text-align:right;font-size:11px;line-height:13px;color:#8a8a8a;">2</div>
<div class="a" style="left:822.4px;top:270px;width:20px;text-align:right;font-size:11px;line-height:13px;color:#8a8a8a;">3</div>
<div class="a" style="left:721.0px;top:285px;width:20px;text-align:right;font-size:11px;line-height:13px;color:#8a8a8a;">4</div>
<div class="a" style="left:737.9px;top:285px;width:20px;text-align:right;font-size:11px;line-height:13px;color:#8a8a8a;">5</div>
<div class="a" style="left:754.8px;top:285px;width:20px;text-align:right;font-size:11px;line-height:13px;color:#8a8a8a;">6</div>
<div class="a" style="left:771.7px;top:285px;width:20px;text-align:right;font-size:11px;line-height:13px;color:#8a8a8a;">7</div>
<div class="a" style="left:788.6px;top:285px;width:20px;text-align:right;font-size:11px;line-height:13px;color:#8a8a8a;">8</div>
<div class="a" style="left:805.5px;top:285px;width:20px;text-align:right;font-size:11px;line-height:13px;color:#8a8a8a;">9</div>
<div class="a" style="left:822.4px;top:285px;width:20px;text-align:right;font-size:11px;line-height:13px;color:#8a8a8a;">10</div>
<!-- task list -->
<div class="a" style="left:570px;top:303px;width:287px;height:293px;border:1px solid #a8a8a8"></div>
<div class="a" style="left:571px;top:320px;width:285px;height:1px;background:#e2e2e2"></div>
<div class="a" style="left:578px;top:305px;font-size:11px;color:#222">Task List</div>
<div class="a" style="left:572px;top:342px;width:280px;height:250px;border:1px solid #8a8a8a;background:#fff"></div>
<div class="a" style="left:617px;top:325px;width:53px;height:18px;border:1px solid #9a9a9a;background:linear-gradient(#f2f2f2,#dcdcdc)"></div>
<div class="a" style="left:669px;top:325px;width:64px;height:18px;border:1px solid #9a9a9a;background:linear-gradient(#f2f2f2,#dcdcdc)"></div>
<div class="a" style="left:732px;top:325px;width:104px;height:18px;border:1px solid #9a9a9a;background:linear-gradient(#f2f2f2,#dcdcdc)"></div>
<div class="a" style="left:572px;top:322px;width:46px;height:21px;border:1px solid #8a8a8a;border-bottom:none;background:#fff"></div>
<div class="a" style="left:581px;top:326px;font-size:11px;color:#111">Tasks</div>
<div class="a" style="left:622px;top:329px;font-size:11px;color:#111">Contacts</div>
<div class="a" style="left:676px;top:329px;font-size:11px;color:#111">Confliction</div>
<div class="a" style="left:738px;top:329px;font-size:10.3px;color:#111">Email Reminder Log</div>
<div class="a" style="left:576px;top:346px;width:275px;height:243px;border:1px solid #7a7a7a;background:#fff"></div>
<div class="a" style="left:577px;top:347px;width:273px;height:35px;background:#a4a4a4"></div>
<div class="a" style="left:584px;top:359px;font-size:10.85px;color:#ececec">Drag a column header here to group by that column</div>
<div class="a" style="left:577px;top:382px;width:273px;height:18px;background:#fff;border-bottom:1px solid #e0e0e0"></div>
<div class="a" style="left:636px;top:383px;width:1px;height:16px;background:#e4e4e4"></div>
<div class="a" style="left:677px;top:383px;width:1px;height:16px;background:#e4e4e4"></div>
<div class="a" style="left:766px;top:383px;width:1px;height:16px;background:#e4e4e4"></div>
<svg class="a" style="left:580px;top:385px" width="8" height="11" viewBox="0 0 8 11"><path d="M0 1 H1.5 M0 3 H1.5 M0 5 H1.5 M0 7 H1.5 M0 9 H1.5" stroke="#333" stroke-width="1.2"/><path d="M3 1 H8 M3 3 H8 M3 5 H8 M3 7 H8 M3 9 H8" stroke="#333" stroke-width="1"/></svg>
<div class="a" style="left:591px;top:386px;font-size:11px;color:#111">Type</div>
<svg class="a" style="left:641px;top:384px" width="13" height="13" viewBox="0 0 13 13"><rect x="0.5" y="0.5" width="12" height="12" fill="#fff" stroke="#7a8ea8"/><path d="M3 6 L5.5 9 L10 3" stroke="#7086a8" stroke-width="1.6" fill="none"/></svg>
<div class="a" style="left:657px;top:386px;font-size:11px;color:#111">Dor</div>
<div class="a" style="left:681px;top:383px;width:15px;height:15px;border:1px solid #5a7ab8;background:#dde8f6;font-size:11px;color:#2a4a8a;text-align:center;line-height:13px">%</div>
<div class="a" style="left:698px;top:386px;font-size:11px;color:#111">% Complete</div>
<div class="a" style="left:770px;top:386px;font-size:11px;color:#111">Caption</div>
<div class="a" style="left:582px;top:479px;width:273px;text-align:center;font-size:11.5px;color:#6a6a6a">&lt;No data to display&gt;</div>
<div class="a" style="left:577px;top:569px;width:273px;height:19px;background:#ebebeb"></div>
<div class="a" style="left:578px;top:570px;width:16px;height:17px;border:1px solid #d0d0d0;border-radius:2px;background:#efefef"></div><svg class="a" style="left:578px;top:571px" width="16" height="15" viewBox="0 0 16 15"><path d="M3 3 V11 M10 3 L5 7 L10 11 Z M14 3 L9 7 L14 11 Z" fill="#bbb" stroke="#bbb" stroke-width="0.8"/></svg>
<div class="a" style="left:596px;top:570px;width:16px;height:17px;border:1px solid #d0d0d0;border-radius:2px;background:#efefef"></div><svg class="a" style="left:596px;top:571px" width="16" height="15" viewBox="0 0 16 15"><path d="M13 3 V11 M2 3 L7 7 L2 11 Z M6 3 L11 7 L6 11 Z" fill="#bbb" stroke="#bbb" stroke-width="0.8"/></svg>
<div class="a" style="left:614px;top:570px;width:16px;height:17px;border:1px solid #7a7a7a;border-radius:2px;background:#e8e8e8"></div><svg class="a" style="left:614px;top:571px" width="16" height="15" viewBox="0 0 16 15"><path d="M8 3 V12 M3.5 7.5 H12.5" stroke="#2aa02a" stroke-width="2.4"/></svg>
<div class="a" style="left:632px;top:570px;width:16px;height:17px;border:1px solid #d0d0d0;border-radius:2px;background:#efefef"></div><svg class="a" style="left:632px;top:571px" width="16" height="15" viewBox="0 0 16 15"><path d="M3.5 7.5 H12.5" stroke="#bbb" stroke-width="1.6"/></svg>
<div class="a" style="left:650px;top:570px;width:16px;height:17px;border:1px solid #7a7a7a;border-radius:2px;background:#e0e0e0"></div><svg class="a" style="left:650px;top:571px" width="16" height="15" viewBox="0 0 16 15"><path d="M3 10 L8 5 L13 10 Z" fill="#222"/></svg>
<div class="a" style="left:668px;top:570px;width:16px;height:17px;border:1px solid #d0d0d0;border-radius:2px;background:#efefef"></div><svg class="a" style="left:668px;top:571px" width="16" height="15" viewBox="0 0 16 15"><path d="M4 7.5 L7 10.5 L12 4.5" stroke="#c8c8c8" stroke-width="1.6" fill="none"/></svg>
<div class="a" style="left:686px;top:570px;width:16px;height:17px;border:1px solid #d0d0d0;border-radius:2px;background:#efefef"></div><svg class="a" style="left:686px;top:571px" width="16" height="15" viewBox="0 0 16 15"><path d="M4 4 L12 12 M12 4 L4 12" stroke="#b8b8b8" stroke-width="1.4"/></svg>
<div class="a" style="left:704px;top:570px;width:16px;height:17px;border:1px solid #5a5a5a;border-radius:2px;background:#e0e0e0"></div><svg class="a" style="left:704px;top:571px" width="16" height="15" viewBox="0 0 16 15"><path d="M4 11 A4.5 4.5 0 1 1 12 8" stroke="#222" stroke-width="1.6" fill="none"/><path d="M10 7 L13 10 L14 6 Z" fill="#222"/></svg>
<!-- events -->
<div class="a" style="left:57px;top:339px;width:157px;height:22px;border:1px solid #101030;border-width:1.5px;background:#8080f8"></div>
<div class="a" style="left:59px;top:341px;width:7px;height:18px;background:#6868e4"></div>
<svg class="a" style="left:69px;top:343px" width="16" height="14" viewBox="0 0 16 14"><g fill="#7aa88a" opacity="0.85"><circle cx="5" cy="4" r="2.3"/><circle cx="11" cy="4" r="2.3"/><path d="M1 10 Q5 6 9 10 Z M7 10 Q11 6 15 10 Z"/><circle cx="8" cy="7" r="2.5"/><path d="M3 13 Q8 7.5 13 13 Z"/></g></svg>
<div class="a" style="left:88px;top:344px;font-size:11px;color:#10104a;white-space:nowrap">Marketing Department...</div>
<div class="a" style="left:231px;top:381px;width:156px;height:20px;border:1.5px solid #111;border-top:none;background:#ff8000;overflow:hidden"><div class="a" style="left:0;top:0;width:7px;height:19px;background:#b87a3a"></div><div class="a" style="left:27.5px;top:-7px;font-size:12px;font-weight:bold;color:#1a0a00;line-height:13px">1398</div></div>
<svg class="a" style="left:377px;top:383px" width="13" height="10" viewBox="0 0 13 10"><path d="M6.5 1 L12 9 H1 Z" fill="#6e6e6e" stroke="#fff" stroke-width="1"/></svg>
<div class="a" style="left:231px;top:457px;width:156px;height:43px;border:1.5px solid #111;background:#ff8000"></div>
<div class="a" style="left:232px;top:458px;width:7px;height:40px;background:#b87a3a"></div>
<svg class="a" style="left:242px;top:459px" width="12" height="15" viewBox="0 0 12 15"><rect x="1" y="2" width="10" height="12" fill="none" stroke="#f8c080" stroke-width="1.2"/><rect x="3" y="0.5" width="6" height="2.5" fill="#a0a0a0"/><path d="M3 8 L8 5" stroke="#8aa090" stroke-width="1"/></svg>
<div class="a" style="left:259px;top:462px;font-size:12px;font-weight:bold;color:#1a0a00;line-height:12.7px">Delivery for PO #<br>1563</div>
<div class="a" style="left:403px;top:381px;width:157px;height:20px;border:1.5px solid #101030;background:#8080f8"></div>
<div class="a" style="left:405px;top:382px;width:6px;height:17px;background:#6464e6"></div>
<svg class="a" style="left:412px;top:383px" width="16" height="16" viewBox="0 0 16 16"><rect x="0" y="0" width="16" height="16" fill="#8c9cf0"/><path d="M0 3.5 H16 M0 7.5 H16 M0 11.5 H16 M3.5 0 V16 M7.5 0 V16 M11.5 0 V16" stroke="#6f86d8" stroke-width="1.2" stroke-dasharray="1.2 0.8"/></svg>
<div class="a" style="left:431px;top:383px;font-size:11.6px;font-weight:bold;color:#0a0a30;white-space:nowrap">Technical Support W...</div>
<div class="a" style="left:403px;top:468px;width:157px;height:21px;border:1.5px solid #101010;background:#84f084"></div>
<div class="a" style="left:405px;top:469px;width:6px;height:18px;background:#66e066"></div>
<svg class="a" style="left:412px;top:471px" width="16" height="15" viewBox="0 0 16 15"><g fill="#7aa890"><circle cx="5" cy="4" r="2.3"/><circle cx="11" cy="4" r="2.3"/><path d="M1 10 Q5 6 9 10 Z M7 10 Q11 6 15 10 Z"/><circle cx="8" cy="7" r="2.5"/><path d="M3 13 Q8 7.5 13 13 Z"/></g></svg>
<div class="a" style="left:431px;top:472px;font-size:11.4px;font-weight:bold;color:#0a200a;white-space:nowrap">BOD Meeting</div>
<div class="a" style="left:387px;top:458px;width:5px;height:42px;background:#fff"></div>
<div class="a" style="left:560px;top:469px;width:5px;height:20px;background:#fff"></div>
<!-- photos -->
<svg class="a" style="left:89px;top:178px" width="102" height="101" viewBox="0 0 102 101">
<defs><pattern id="tw" width="4" height="4" patternUnits="userSpaceOnUse"><rect width="4" height="4" fill="#606167"/><rect x="1" y="1" width="1" height="1" fill="#a4a4a8"/><rect x="3" y="3" width="1" height="1" fill="#4a4b50"/></pattern></defs>
<rect x="1.5" y="1.5" width="99" height="98" fill="#fff" stroke="#111" stroke-width="1.6"/>
<path d="M20 99 L19 76 Q18 52 28 48 L42 42 L50 40 L58 42 L72 47 Q81 52 80 72 L79 99 Z" fill="url(#tw)"/>
<path d="M43 41 L50 39 L57 41 L55 52 L50 62 L45 52 Z" fill="#dfe6ec"/>
<path d="M48.5 44 L52 44 L54 58 L50.5 64 L47 58 Z" fill="#a4c2dc"/>
<path d="M30 60 L42 52 L50 68 L38 72 Z" fill="#5a5b61" opacity="0.6"/>
<path d="M24 72 Q48 64 79 66 L80 80 Q50 86 23 84 Z" fill="url(#tw)"/>
<path d="M24 72 Q48 64 79 66" stroke="#4a4b50" stroke-width="1" fill="none"/>
<path d="M34 76 L44 73 L45 83 L34 83 Z" fill="#e6b898"/>
<path d="M63 69 L73 68 L74 75 L63 76 Z" fill="#e2ae8e"/>
<path d="M26 86 Q50 90 78 86 L78 99 L26 99 Z" fill="#5e5f65"/>
<rect x="34" y="91" width="34" height="8" fill="#3a3a3e"/>
<path d="M44 33 L44 42 L56 42 L56 33 Z" fill="#d49a7a"/>
<ellipse cx="50" cy="25" rx="10.5" ry="14.5" fill="#e4b090"/>
<path d="M39 23 Q37 7 50 6.5 Q63 7 61 23 L59 16 Q50 12 41 16 Z" fill="#2a2420"/>
<path d="M44.5 30 Q50 35 55.5 30" stroke="#fff" stroke-width="2.2" fill="none"/>
</svg>
<div class="a" style="left:90px;top:283px;width:100px;text-align:center;font-size:10.3px;color:#333">John Doe</div>
<div class="a" style="left:231px;top:174px;width:161px;height:127px;border:2px solid #3d8ee0"></div>
<svg class="a" style="left:258px;top:192px" width="106" height="72" viewBox="0 0 106 72">
<defs><linearGradient id="bxf" x1="0" y1="0" x2="1" y2="0"><stop offset="0" stop-color="#d4d4d4"/><stop offset="1" stop-color="#e8e8e8"/></linearGradient>
<linearGradient id="bxs" x1="0" y1="0" x2="0" y2="1"><stop offset="0" stop-color="#f2f2f2"/><stop offset="1" stop-color="#fafafa"/></linearGradient></defs>
<ellipse cx="55" cy="63" rx="46" ry="5" fill="#efefef"/>
<path d="M63.6 4.9 L101.5 15.3 L101.5 41.6 L63.6 45.2 Z" fill="url(#bxs)" stroke="#d8d8d8" stroke-width="0.6"/>
<path d="M44 11.6 L63.6 4.9 L63.6 45.2 L45 45 Z" fill="url(#bxf)"/>
<path d="M63.6 4.9 L101.5 15.3" stroke="#999" stroke-width="0.8" stroke-dasharray="1.5 1"/>
<path d="M60 46.5 L97 42 L97 52 L60 56 Z" fill="#222"/>
<circle cx="90.5" cy="50.5" r="6.8" fill="#1c1c1c"/><circle cx="90.5" cy="50.5" r="3" fill="#b8b8b8"/>
<path d="M5.5 42 L7.3 40.3 L26.3 35.5 L30.6 23.8 L41.6 22 L60 22 L60 50 L45 57.5 L24 57.5 L5.5 51 Z" fill="#fbfbfb" stroke="#d4d4d4" stroke-width="0.6"/>
<path d="M26.8 35 L30.8 24.2 L41.2 23 L40 35 Z" fill="#8c9cac"/>
<path d="M43.4 22.6 L54.4 23 L54.4 33.6 L43.4 35 Z" fill="#2e3a46"/>
<path d="M6.7 41.6 L9.8 41 L9.8 51.3 L6.7 50.5 Z" fill="#333"/>
<path d="M5.5 49 L24.4 53 L24.4 57.5 L6 55 Z" fill="#1e1e1e"/>
<path d="M13 45.5 L21 44 L21 47 L13 48 Z" fill="#e6e6e6" stroke="#aaa" stroke-width="0.5"/>
<path d="M45 49 L58.7 48 L58.7 56 L45 57 Z" fill="#d6d6d6"/>
<path d="M22 57 A11.5 11.5 0 0 1 45 57 Z" fill="#2a2a2a"/>
<circle cx="33.6" cy="58.7" r="10.2" fill="#161616"/><circle cx="33.6" cy="58.7" r="5" fill="#d8d8d8"/><circle cx="33.6" cy="58.7" r="2" fill="#777"/>
</svg>
<div class="a" style="left:231px;top:283px;width:161px;text-align:center;font-size:10.8px;color:#333">Delivery Truck</div>
<svg class="a" style="left:434px;top:178px" width="102" height="102" viewBox="0 0 102 102">
<defs>
<linearGradient id="ceil" x1="0" y1="0" x2="1" y2="0"><stop offset="0" stop-color="#9aa6ae"/><stop offset="0.5" stop-color="#c4c9cc"/><stop offset="1" stop-color="#8a8e90"/></linearGradient>
<linearGradient id="win" x1="0" y1="0" x2="0" y2="1"><stop offset="0" stop-color="#b4c6cc"/><stop offset="1" stop-color="#7e969e"/></linearGradient>
<linearGradient id="cor" x1="0" y1="0" x2="0" y2="1"><stop offset="0" stop-color="#8a7e68"/><stop offset="1" stop-color="#4a4236"/></linearGradient>
<linearGradient id="flr" x1="0" y1="0" x2="1" y2="0"><stop offset="0" stop-color="#9aa8b0"/><stop offset="0.45" stop-color="#5a6268"/><stop offset="1" stop-color="#33373a"/></linearGradient>
</defs>
<rect x="1.5" y="1.5" width="99" height="99" fill="#fff" stroke="#111" stroke-width="1.6"/>
<rect x="2.4" y="26" width="97" height="48.5" fill="url(#flr)"/>
<rect x="2.4" y="26" width="97" height="9" fill="url(#ceil)"/>
<rect x="2.4" y="30" width="27" height="31" fill="url(#win)"/>
<path d="M17 30 V61 M29 30 V61 M2.4 44 H29" stroke="#d4e0e4" stroke-width="0.9"/>
<rect x="29.4" y="32" width="16.5" height="18" fill="#3c4448"/>
<rect x="46" y="35" width="10.5" height="15" fill="#8c9296"/>
<rect x="56.5" y="35" width="20" height="15" fill="#dadedf"/>
<rect x="76.5" y="33" width="6" height="25" fill="#b8b4ac"/>
<rect x="82.4" y="32.6" width="11.6" height="26" fill="url(#cor)"/>
<rect x="94" y="26" width="5.4" height="48.5" fill="#1e2226"/>
<path d="M12.9 48 H47 V56 H12.9 Z" fill="#2e3236"/>
<path d="M2.4 60 L25 51 L75 49.5 L77 53 L50 72.6 L2.4 74.4 Z" fill="#eceef0"/>
<path d="M27 52.6 L75 50.2 L76 53 L60 62 Z" fill="#f8f9fa"/>
<path d="M47 72.6 L76 53 L81 60 L60 74.4 Z" fill="#3a3e42"/>
<path d="M69.4 49 H81.2 V71.4 H69.4 Z" fill="#2a2c2e"/>
<path d="M12 64 L30 60 M38 66 L52 60 M50 58 L64 55" stroke="#6a7278" stroke-width="1.3" stroke-dasharray="2 2"/>
<path d="M2.4 66 L12 64 L14 74.4 H2.4 Z" fill="#a8b4bc"/>
</svg>
<div class="a" style="left:403px;top:283px;width:162px;text-align:center;font-size:10.4px;color:#333">Meeting Room</div>
<svg class="a" style="left:13px;top:580px" width="70" height="12" viewBox="0 0 70 12"><g fill="#a8a8a8" stroke="#a8a8a8" stroke-width="0.7"><path d="M1.5 2 V10 M8 2 L3.5 6 L8 10 Z M12 2 L7.5 6 L12 10 Z"/><path d="M29 2 V10 M20 2 L24.5 6 L20 10 Z M24 2 L28.5 6 L24 10 Z"/></g><path d="M43 2 V10 M39 6 H47 M56 6 H65" stroke="#a8a8a8" stroke-width="1.5"/></svg>
<div class="a" style="left:7px;top:598px;width:853px;height:21px;background:#f0f0f0;border-top:1px solid #9a9a9a;border-bottom:1px solid #6a6a6a"></div>
<div class="a" style="left:11px;top:603px;font-size:11px;color:#a8a8a8;word-spacing:0px;white-space:nowrap">CAPS</div>
<div class="a" style="left:47px;top:603px;font-size:11px;color:#a8a8a8">NUM</div>
<div class="a" style="left:80px;top:603px;font-size:11px;color:#a8a8a8">SCRL</div>
<div class="a" style="left:118px;top:603px;font-size:11px;color:#a8a8a8">INS</div>
<div class="a" style="left:143px;top:600px;width:1px;height:18px;background:#d8d8d8"></div>
<div class="a" style="left:146px;top:603px;font-size:10.7px;color:#111;white-space:nowrap">Data loaded all at once. Totally 6 event(s) loaded.</div>
<svg class="a" style="left:848px;top:607px" width="9" height="9" viewBox="0 0 9 9"><g fill="#b0b0b0"><rect x="6" y="0" width="2" height="2"/><rect x="3" y="3" width="2" height="2"/><rect x="6" y="3" width="2" height="2"/><rect x="0" y="6" width="2" height="2"/><rect x="3" y="6" width="2" height="2"/><rect x="6" y="6" width="2" height="2"/></g></svg>
<!-- status bar end -->
</body></html>
